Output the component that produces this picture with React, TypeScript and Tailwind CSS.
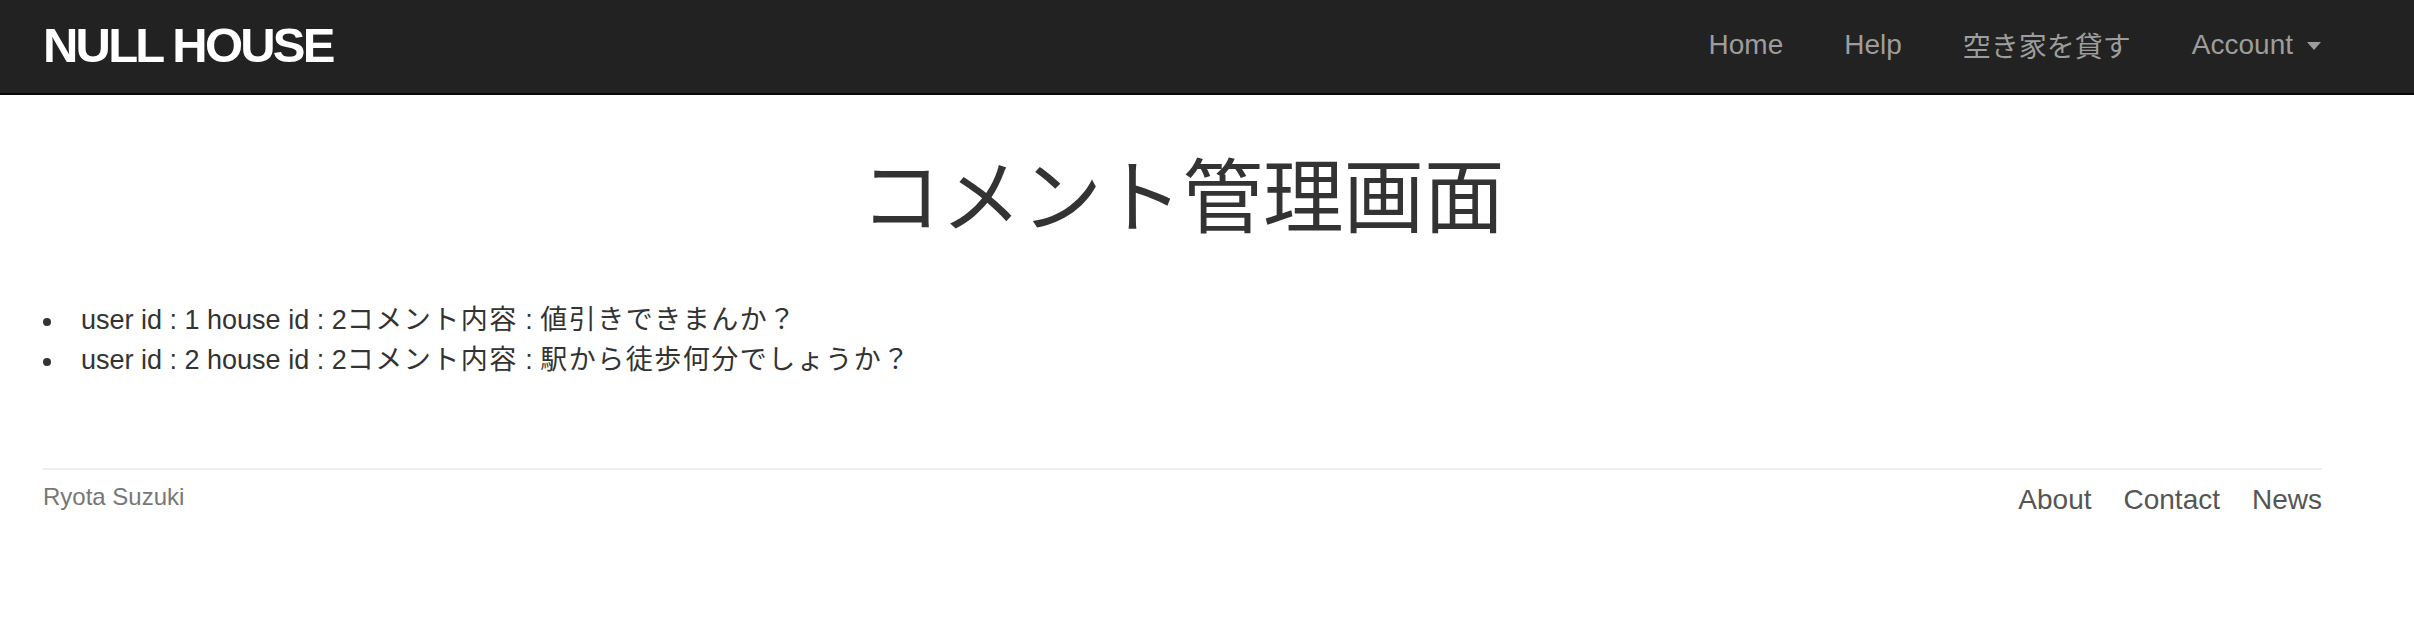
import React from "react";

const comments = [
  { user: 1, house: 2, body: "値引きできまんか？" },
  { user: 2, house: 2, body: "駅から徒歩何分でしょうか？" },
];

export default function App() {
  return (
    <div className="min-h-[622px] bg-white font-['Liberation_Sans','Noto_Sans_CJK_JP',sans-serif] text-[#333333]">
      {/* Navbar */}
      <header className="h-[95px] bg-[#222222] border-b-2 border-[#080808]">
        <div className="flex h-[93px] items-start justify-between pl-[43px] pr-[93px]">
          <a className="mt-[21px] block text-[49px] leading-[49px] font-bold tracking-[-2.8px] text-white">
            NULL HOUSE
          </a>
          <nav className="mt-[31px] flex items-start gap-[61px] text-[28px] leading-[28px] text-[#9d9d9d]">
            <a>Home</a>
            <a>Help</a>
            <a className="font-['Noto_Sans_CJK_JP',sans-serif] text-[28px]">空き家を貸す</a>
            <a className="flex items-center">
              <span>Account</span>
              <span className="ml-[14px] mt-[2px] block h-0 w-0 border-x-[7px] border-t-[8px] border-x-transparent border-t-[#9d9d9d]" />
            </a>
          </nav>
        </div>
      </header>

      <main className="pl-[43px] pr-[92px]">
        <h1 className="mt-[52px] text-center font-['Noto_Sans_CJK_JP',sans-serif] text-[80.5px] leading-[88px] font-normal text-[#333333]">
          コメント管理画面
        </h1>

        <ul className="mt-[65px] text-[27px] leading-[40px]">
          {comments.map((c) => (
            <li key={c.user} className="flex">
              <span className="w-[38px] shrink-0 pt-[18px]">
                <span className="block h-[8px] w-[8px] rounded-full bg-[#333333]" />
              </span>
              <span>
                <span>{`user id : ${c.user} house id : ${c.house}`}</span>
                <span className="tracking-[1.5px]">コメント内容</span>
                <span>{" : "}</span>
                <span className="tracking-[1.5px]">{c.body}</span>
              </span>
            </li>
          ))}
        </ul>

        <footer className="mt-[88px]">
          <div className="h-[2px] bg-[#eeeeee]" />
          <div className="flex items-start justify-between">
            <p className="mt-[10px] text-[24px] leading-[34px] text-[#777777]">Ryota Suzuki</p>
            <nav className="mt-[10px] flex gap-[32px] text-[28px] leading-[40px] text-[#555555]">
              <a>About</a>
              <a>Contact</a>
              <a>News</a>
            </nav>
          </div>
        </footer>
      </main>
    </div>
  );
}
